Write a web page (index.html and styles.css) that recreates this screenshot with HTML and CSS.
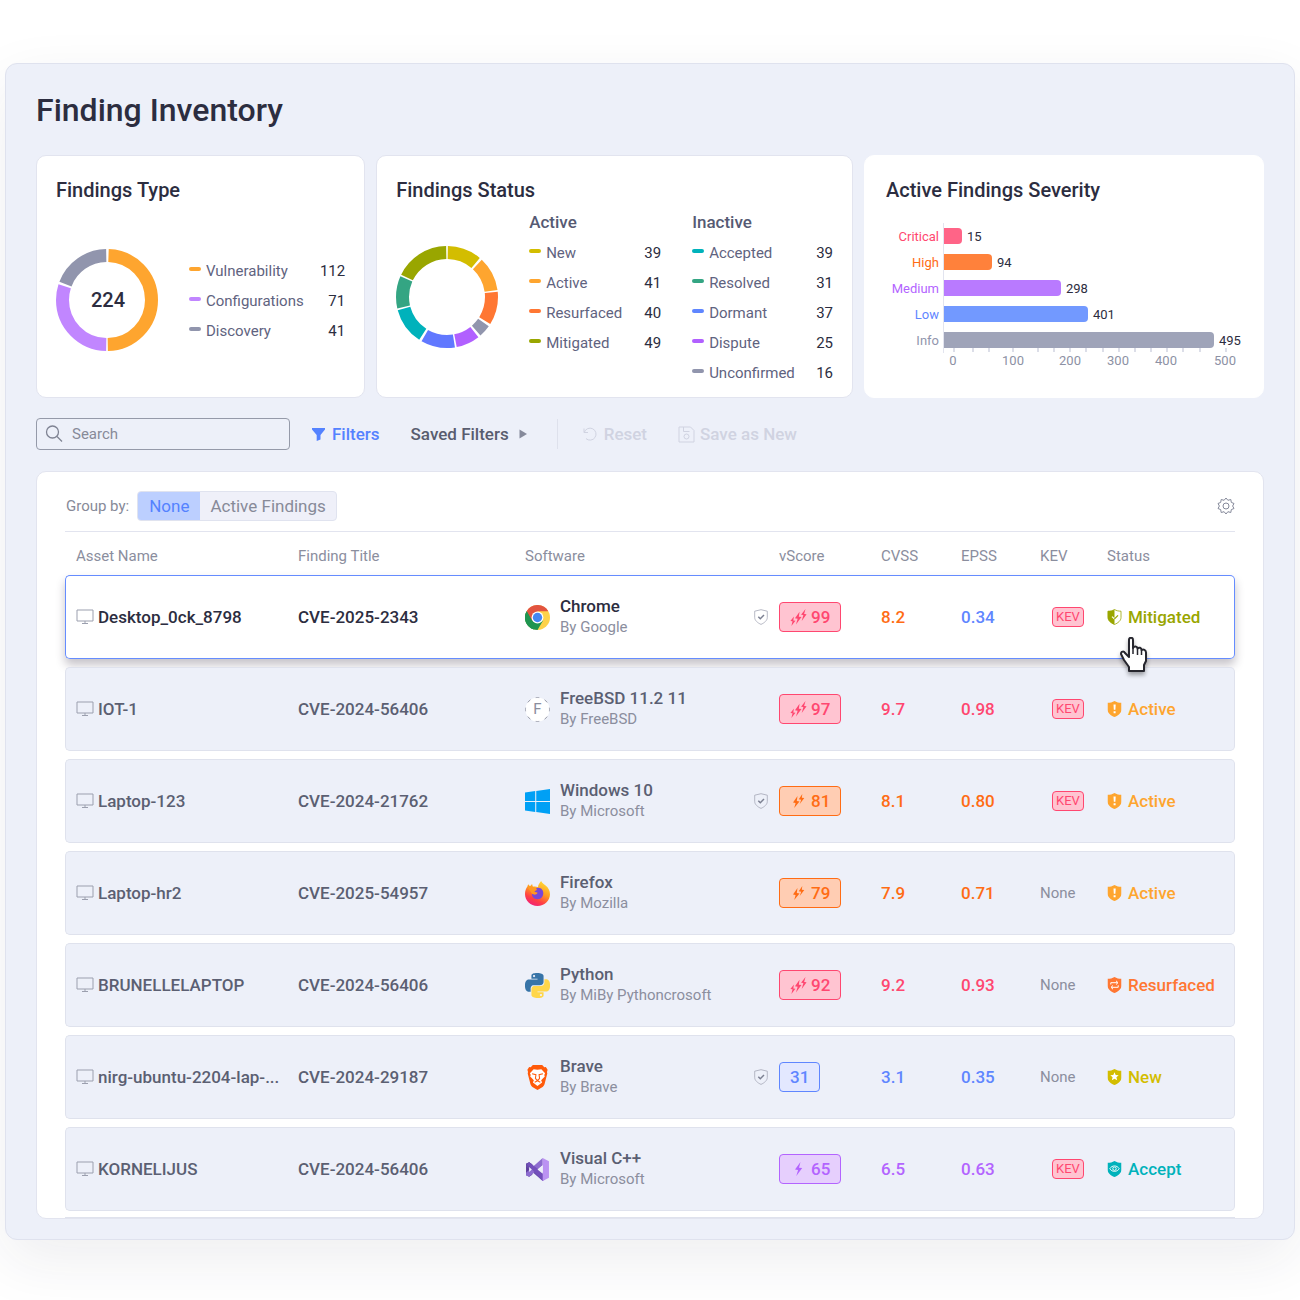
FILE: index.html
```html
<!DOCTYPE html>
<html lang="en">
<head>
    <meta charset="UTF-8" />
    <meta name="viewport" content="width=device-width, initial-scale=1.0" />
    <title>Finding Inventory</title>
    <link rel="stylesheet" href="styles.css">
</head>
<body>
    <!-- Shared icons -->
    <svg class="sprite" aria-hidden="true">
        <symbol id="monitor" viewBox="0 0 18 16"><path d="M1 1h16v11H1zM9 12v2.500M6 14.500h6" fill="none" stroke="currentColor"/></symbol>
        <symbol id="verified" viewBox="0 0 14 16"><path d="M7 .7 13.300 2.200v6.300c0 3-3 5.400-6.300 6.900C3.700 13.900.7 11.500.7 8.500V2.200z" fill="none" stroke="currentColor" stroke-width=".8"/><path d="m4.300 7.700 2 2L10 6" fill="none" stroke="#7c8092" stroke-width="1.500"/></symbol>
        <symbol id="bolt" viewBox="0 0 8 14"><path d="M6 0 .5 7.600 3.600 8 1.800 14 7.700 6 4.500 5.700z" fill="currentColor"/></symbol>
        <symbol id="bolt2" viewBox="0 0 12 14"><path d="M5 2 .5 8.600l2.600.3L1.700 14 7 7.400l-2.700-.3zM9.800 0 6.300 5.300l2.400.4L7.200 10 11.800 4 9.300 3.700z" fill="currentColor"/></symbol>
        <symbol id="bolt3" viewBox="0 0 16 16"><path d="M3.700 7 .4 11.300l2 .3L1.300 16l3.800-5-2-.2zM9 2.500 4.700 8.800l2.500.3L5.600 14.500l5.200-7-2.500-.3zM14.600 0l-4.200 5.300 2.200.4L11 11.300 15.600 5l-2.300-.3z" fill="currentColor"/></symbol>
        <symbol id="shield" viewBox="0 0 14 16"><path d="M7 0c2 1.300 4.500 1.800 7 1.800v6.700c0 3.500-3.300 6-7 7.500-3.700-1.500-7-4-7-7.500V1.800C2.500 1.800 5 1.300 7 0z" fill="currentColor"/></symbol>
        <symbol id="st-mitigated" viewBox="0 0 14 16"><path d="M7 .5c2 1.200 4 1.700 6.500 1.700v6.300c0 3.200-3 5.500-6.500 7C3.500 14 .5 11.700.5 8.500V2.200C3 2.200 5 1.700 7 .5z" fill="none" stroke="currentColor" stroke-width=".8"/><path d="M7 .5v15C3.500 14 .3 11.700.3 8.500V2C3 2.200 5 1.700 7 .5z" fill="currentColor"/><path d="m4.500 7.600 2.300 2.200" stroke="#fff" stroke-width="1.200"/><path d="M7 9.800 10.500 6.300" stroke="currentColor" stroke-width="1.200"/></symbol>
        <symbol id="st-active" viewBox="0 0 14 16"><use href="#shield"/><path d="M6 3.500h2.200l-.3 5.300H6.300zM6.100 10.300h2v2h-2z" fill="#fff"/></symbol>
        <symbol id="st-resurfaced" viewBox="0 0 14 16"><use href="#shield"/><path d="M3.300 7.500V5.700h6.500M8.500 3.800l2 1.900-2 1.800M10.700 8.300v2H4.200M5.500 8.500l-2 1.800 2 1.900" fill="none" stroke="#fff"/></symbol>
        <symbol id="st-new" viewBox="0 0 14 16"><use href="#shield"/><path d="m7 3.300 1.200 2.800 3 .2-2.300 2 .8 3L7 9.700l-2.700 1.600.8-3-2.300-2 3-.2z" fill="#fff"/></symbol>
        <symbol id="st-accept" viewBox="0 0 14 16"><use href="#shield"/><path d="M2.300 7.700C4.500 4 9.500 4 11.700 7.700 9.500 11.300 4.500 11.300 2.300 7.700z" fill="none" stroke="#fff" stroke-width=".9"/><circle cx="7" cy="7.700" r="1.700" fill="none" stroke="#fff" stroke-width=".9"/></symbol>
    </svg>

    <main class="panel">
        <h1>Finding Inventory</h1>

        <div class="cards">
            <section class="card">
                <h2>Findings Type</h2>
                <div class="type-body">
                    <svg class="donut" viewBox="0 0 102 102" role="img" aria-label="Findings by type">
                        <g fill="none" stroke-width="13" transform="rotate(-90 51 51)">
                            <circle cx="51" cy="51" r="44.500" pathLength="360" stroke="#fea52f" stroke-dasharray="177 183" stroke-dashoffset="-2"/>
                            <circle cx="51" cy="51" r="44.500" pathLength="360" stroke="#c186ff" stroke-dasharray="107 253" stroke-dashoffset="-181"/>
                            <circle cx="51" cy="51" r="44.500" pathLength="360" stroke="#9195ad" stroke-dasharray="68 292" stroke-dashoffset="-291"/>
                        </g>
                        <text class="donut-total" x="52" y="58" text-anchor="middle">224</text>
                    </svg>
                    <ul class="legend">
                        <li><i class="dash amber"></i>Vulnerability<b>112</b></li>
                        <li><i class="dash violet"></i>Configurations<b>71</b></li>
                        <li><i class="dash grey"></i>Discovery<b>41</b></li>
                    </ul>
                </div>
            </section>

            <section class="card">
                <h2>Findings Status</h2>
                <div class="status-body">
                    <svg class="donut" viewBox="0 0 102 102" role="img" aria-label="Findings by status">
                        <g fill="none" stroke-width="13" transform="rotate(-90 51 51)">
                            <circle cx="51" cy="51" r="44.500" pathLength="360" stroke="#d3bd00" stroke-dasharray="39 321" stroke-dashoffset="-1"/>
                            <circle cx="51" cy="51" r="44.500" pathLength="360" stroke="#fea52f" stroke-dasharray="39 321" stroke-dashoffset="-43"/>
                            <circle cx="51" cy="51" r="44.500" pathLength="360" stroke="#ff7733" stroke-dasharray="38 322" stroke-dashoffset="-84"/>
                            <circle cx="51" cy="51" r="44.500" pathLength="360" stroke="#9195ad" stroke-dasharray="14 346" stroke-dashoffset="-125"/>
                            <circle cx="51" cy="51" r="44.500" pathLength="360" stroke="#b160ff" stroke-dasharray="27 333" stroke-dashoffset="-142"/>
                            <circle cx="51" cy="51" r="44.500" pathLength="360" stroke="#6178ff" stroke-dasharray="39 321" stroke-dashoffset="-171"/>
                            <circle cx="51" cy="51" r="44.500" pathLength="360" stroke="#00b2bb" stroke-dasharray="42 318" stroke-dashoffset="-213"/>
                            <circle cx="51" cy="51" r="44.500" pathLength="360" stroke="#34a583" stroke-dasharray="37 323" stroke-dashoffset="-257"/>
                            <circle cx="51" cy="51" r="44.500" pathLength="360" stroke="#99a600" stroke-dasharray="63 297" stroke-dashoffset="-296"/>
                        </g>
                    </svg>
                    <div class="status-group">
                        <h3>Active</h3>
                        <ul class="legend">
                            <li><i class="dash yellow"></i>New<b>39</b></li>
                            <li><i class="dash amber"></i>Active<b>41</b></li>
                            <li><i class="dash orange"></i>Resurfaced<b>40</b></li>
                            <li><i class="dash olive"></i>Mitigated<b>49</b></li>
                        </ul>
                    </div>
                    <div class="status-group">
                        <h3>Inactive</h3>
                        <ul class="legend">
                            <li><i class="dash teal"></i>Accepted<b>39</b></li>
                            <li><i class="dash green"></i>Resolved<b>31</b></li>
                            <li><i class="dash blue"></i>Dormant<b>37</b></li>
                            <li><i class="dash purple"></i>Dispute<b>25</b></li>
                            <li><i class="dash grey"></i>Unconfirmed<b>16</b></li>
                        </ul>
                    </div>
                </div>
            </section>

            <section class="card card-severity">
                <h2>Active Findings Severity</h2>
                <ul class="bars">
                    <li class="critical"><span>Critical</span><div class="track"><i class="bar" style="width: 6%"></i>15</div></li>
                    <li class="high"><span>High</span><div class="track"><i class="bar" style="width: 16%"></i>94</div></li>
                    <li class="medium"><span>Medium</span><div class="track"><i class="bar" style="width: 39%"></i>298</div></li>
                    <li class="low"><span>Low</span><div class="track"><i class="bar" style="width: 48%"></i>401</div></li>
                    <li class="info"><span>Info</span><div class="track"><i class="bar" style="width: 90%"></i>495</div></li>
                </ul>
                <svg class="axis" viewBox="0 0 301 22" aria-hidden="true">
                    <path d="M11 0v4M30 0v4M46 0v4M70 0v4M95 0v4M111 0v4M127 0v4M143 0v4M160 0v4M176 0v4M192 0v4M208 0v4M224 0v4M240 0v4M257 0v4M283 0v4" stroke="#dcdee8" stroke-width="2"/>
                    <g text-anchor="middle">
                        <text x="10" y="17">0</text>
                        <text x="70" y="17">100</text>
                        <text x="127" y="17">200</text>
                        <text x="175" y="17">300</text>
                        <text x="223" y="17">400</text>
                        <text x="282" y="17">500</text>
                    </g>
                </svg>
            </section>
        </div>

        <div class="toolbar">
            <label class="search">
                <svg width="18" height="18" viewBox="0 0 18 18" fill="none" stroke="#7f8393" stroke-width="1.300" aria-hidden="true"><circle cx="7.500" cy="7" r="6"/><path d="m12 11.500 5 5"/></svg>
                <input type="search" placeholder="Search" aria-label="Search">
            </label>
            <button class="tool filters"><svg width="13" height="13" viewBox="0 0 13 13" aria-hidden="true"><path d="M0 0h13v1.500L8.500 7v4.500L4.700 13V7L0 1.500z" fill="currentColor"/></svg>Filters</button>
            <button class="tool saved">Saved Filters<svg width="8" height="10" viewBox="0 0 8 10" aria-hidden="true"><path d="M.5.500 8 5 .5 9.500z" fill="#868a9b"/></svg></button>
            <span class="divider"></span>
            <button class="tool reset" disabled><svg width="14" height="14" viewBox="0 0 14 14" fill="none" stroke="currentColor" aria-hidden="true"><path d="M1 1.500v4h4M1.300 5.300A6 6 0 1 1 3 11.600"/></svg>Reset</button>
            <button class="tool save" disabled><svg width="17" height="17" viewBox="0 0 17 17" fill="none" stroke="currentColor" aria-hidden="true"><path d="M1 1h11.500L16 4.500V16H1zM5.500 1v4.500h6"/><circle cx="8.500" cy="10.500" r="2.500"/></svg>Save as New</button>
        </div>

        <section class="inventory">
            <div class="group-bar">
                <span class="group-label">Group by:</span>
                <div class="segmented" role="group" aria-label="Group by">
                    <button class="selected" aria-pressed="true">None</button>
                    <button aria-pressed="false">Active Findings</button>
                </div>
                <button class="settings" aria-label="Table settings">
                    <svg width="18" height="18" viewBox="0 0 18 18" fill="none" stroke="#85899a" aria-hidden="true"><path d="M9 1l1.900 2.300 2.900-.8.500 2.900 2.700 1.100L15.600 9l1.400 2.500-2.700 1.100-.5 2.900-2.900-.8L9 17l-1.900-2.300-2.900.8-.5-2.900L1 11.500 2.400 9 1 6.500l2.700-1.100.5-2.900 2.900.8z" stroke-linejoin="round"/><circle cx="9" cy="9" r="3"/></svg>
                </button>
            </div>

            <table>
                <colgroup>
                    <col class="c-asset"><col class="c-finding"><col class="c-software"><col class="c-score"><col class="c-cvss"><col class="c-epss"><col class="c-kev"><col class="c-status">
                </colgroup>
                <thead>
                    <tr><th>Asset Name</th><th>Finding Title</th><th>Software</th><th>vScore</th><th>CVSS</th><th>EPSS</th><th>KEV</th><th>Status</th></tr>
                </thead>
                <tbody>
                    <tr class="active-row">
                        <td><div class="asset"><svg><use href="#monitor"/></svg><span>Desktop_0ck_8798</span></div></td>
                        <td>CVE-2025-2343</td>
                        <td>
                            <div class="software">
                                <svg class="logo" viewBox="0 0 24 24"><circle cx="12" cy="12" r="12" fill="#fdd24a"/><path d="M12 12 1.600 6A12 12 0 0 0 12 24l5.200-9z" fill="#1f9550"/><path d="M1.600 6a12 12 0 0 1 20.800 0H12v6z" fill="#e25440"/><path d="M1.600 6 6.800 15 12 12V6z" fill="#e25440"/><path d="M1.600 6 6.800 15a6 6 0 0 0 5.200 3l-3.400 5.600A12 12 0 0 1 1.600 6z" fill="#1f9550"/><circle cx="12" cy="12" r="5.700" fill="#fff"/><circle cx="12" cy="12" r="4.500" fill="#4587f3"/></svg>
                                <div class="names"><strong>Chrome</strong><small>By Google</small></div>
                                <svg class="verified"><use href="#verified"/></svg>
                            </div>
                        </td>
                        <td><span class="score critical"><svg><use href="#bolt3"/></svg>99</span></td>
                        <td class="high">8.2</td>
                        <td class="low">0.34</td>
                        <td><span class="kev">KEV</span></td>
                        <td>
                            <div class="status olive"><svg><use href="#st-mitigated"/></svg>Mitigated
                                <svg class="pointer" viewBox="0 0 28 36" aria-hidden="true"><path d="M9 3c0-3 4-3 4 0v8c1-2 4-2 4.500.5C19 10 21.500 10.500 21.500 13c2-1 4.500 0 4.500 2.500V24l-2 4v6H9v-4L4 23l-3-6c0-3 3-3 4-1l4 4z" fill="#fff" stroke="#26262e" stroke-width="2" stroke-linejoin="round"/><path d="M13 10v7M17.500 12v6M21.500 13v5" stroke="#26262e" stroke-width="1.500"/></svg>
                            </div>
                        </td>
                    </tr>
                    <tr>
                        <td><div class="asset"><svg><use href="#monitor"/></svg><span>IOT-1</span></div></td>
                        <td>CVE-2024-56406</td>
                        <td>
                            <div class="software">
                                <span class="logo letter"><svg viewBox="0 0 25 25" aria-hidden="true"><circle cx="12.500" cy="12.500" r="12" pathLength="80" fill="#fff" stroke="#9a9dab" stroke-dasharray="4 6" stroke-dashoffset="2"/></svg>F</span>
                                <div class="names"><strong>FreeBSD 11.2 11</strong><small>By FreeBSD</small></div>
                            </div>
                        </td>
                        <td><span class="score critical"><svg><use href="#bolt3"/></svg>97</span></td>
                        <td class="critical">9.7</td>
                        <td class="critical">0.98</td>
                        <td><span class="kev">KEV</span></td>
                        <td><div class="status amber"><svg><use href="#st-active"/></svg>Active</div></td>
                    </tr>
                    <tr>
                        <td><div class="asset"><svg><use href="#monitor"/></svg><span>Laptop-123</span></div></td>
                        <td>CVE-2024-21762</td>
                        <td>
                            <div class="software">
                                <svg class="logo" viewBox="0 0 24 24"><path d="M0 3.400 9.800 2v9.500H0zM10.800 1.900 24 0v11.500H10.800zM0 12.500h9.800V22L0 20.600zM10.800 12.500H24V24l-13.200-1.900z" fill="#00a0f5"/></svg>
                                <div class="names"><strong>Windows 10</strong><small>By Microsoft</small></div>
                                <svg class="verified"><use href="#verified"/></svg>
                            </div>
                        </td>
                        <td><span class="score high"><svg><use href="#bolt2"/></svg>81</span></td>
                        <td class="high">8.1</td>
                        <td class="high">0.80</td>
                        <td><span class="kev">KEV</span></td>
                        <td><div class="status amber"><svg><use href="#st-active"/></svg>Active</div></td>
                    </tr>
                    <tr>
                        <td><div class="asset"><svg><use href="#monitor"/></svg><span>Laptop-hr2</span></div></td>
                        <td>CVE-2025-54957</td>
                        <td>
                            <div class="software">
                                <svg class="logo" viewBox="0 0 24 24">
                                    <defs>
                                        <linearGradient id="fox" x1=".8" y1="0" x2=".3" y2="1"><stop offset="0" stop-color="#ffe13a"/><stop offset=".45" stop-color="#ff9a1f"/><stop offset=".75" stop-color="#ff3f45"/><stop offset="1" stop-color="#f0207a"/></linearGradient>
                                    </defs>
                                    <path d="M15.500 0c1 2 2.500 3 4.300 4.300C22.500 6.500 24 9.500 24 12.800 24 19 18.600 24 12 24S0 19 0 12.500c0-3 1-5.500 2.300-7.200L3 3l1.800 2 2-2.200.7 2.600c2-.4 3.700-.1 5 .6C12.500 3.500 14 2 15.500 0z" fill="url(#fox)"/>
                                    <path d="M12 6.500c3.500-.5 6 2.500 5.500 6-.4 3.300-3 5-5.500 5-3.500 0-5.500-2.500-5.300-5.200L9.500 13l2.700-1.700-3-.8c.2-2 1.300-3.500 2.800-4z" fill="#7847d8"/>
                                    <path d="M2.500 6c2-1 5-1 7 .6l2 1.400c-.5 1.500-2 1.500-3 2l3.500 1.500c-1 1.700-3.500 2-5.200.8" fill="#ff9822"/>
                                </svg>
                                <div class="names"><strong>Firefox</strong><small>By Mozilla</small></div>
                            </div>
                        </td>
                        <td><span class="score high"><svg><use href="#bolt2"/></svg>79</span></td>
                        <td class="high">7.9</td>
                        <td class="high">0.71</td>
                        <td class="none">None</td>
                        <td><div class="status amber"><svg><use href="#st-active"/></svg>Active</div></td>
                    </tr>
                    <tr>
                        <td><div class="asset"><svg><use href="#monitor"/></svg><span>BRUNELLELAPTOP</span></div></td>
                        <td>CVE-2024-56406</td>
                        <td>
                            <div class="software">
                                <svg class="logo" viewBox="0 0 24 24">
                                    <path fill="#3774a8" d="M14.250.18l.9.2.73.26.59.3.45.32.34.34.25.34.16.33.1.3.04.26.02.2-.01.13V8.500l-.05.63-.13.55-.21.46-.26.38-.3.31-.33.25-.35.19-.35.14-.33.1-.3.07-.26.04-.21.02H8.770l-.69.05-.59.14-.5.22-.41.27-.33.32-.27.35-.2.36-.15.37-.1.35-.07.32-.04.27-.02.21v3.060H3.170l-.21-.03-.28-.07-.32-.12-.35-.18-.36-.26-.36-.36-.35-.46-.32-.59-.28-.73-.21-.88-.14-1.050-.05-1.230.06-1.220.16-1.040.24-.87.32-.71.36-.57.4-.44.42-.33.42-.24.4-.16.36-.1.32-.05.24-.01h.16l.06.01h8.160v-.83H6.180l-.01-2.750-.02-.37.05-.34.11-.31.17-.28.25-.26.31-.23.38-.2.44-.18.51-.15.58-.12.64-.1.71-.06.77-.04.84-.02 1.270.05zm-6.300 1.980l-.23.33-.08.41.08.41.23.34.33.22.41.09.41-.09.33-.22.23-.34.08-.41-.08-.41-.23-.33-.33-.22-.41-.09-.41.09z"/>
                                    <path fill="#ffd64a" d="M21.040 6.110l.28.06.32.12.35.18.36.27.36.35.35.47.32.59.28.73.21.88.14 1.040.05 1.230-.06 1.230-.16 1.040-.24.86-.32.71-.36.57-.4.45-.42.33-.42.24-.4.16-.36.09-.32.05-.24.02-.16-.01h-8.220v.82h5.840l.01 2.760.02.36-.05.34-.11.31-.17.29-.25.25-.31.24-.38.2-.44.17-.51.15-.58.13-.64.09-.71.07-.77.04-.84.01-1.270-.04-1.070-.14-.9-.2-.73-.25-.59-.3-.45-.33-.34-.34-.25-.34-.16-.33-.1-.3-.04-.25-.02-.2.01-.13v-5.340l.05-.64.13-.54.21-.46.26-.38.3-.32.33-.24.35-.2.35-.14.33-.1.3-.06.26-.04.21-.02.13-.01h5.840l.69-.05.59-.14.5-.21.41-.28.33-.32.27-.35.2-.36.15-.36.1-.35.07-.32.04-.28.02-.21V6.070h2.090l.14.01zm-6.470 14.250l-.23.33-.08.41.08.41.23.33.33.23.41.08.41-.08.33-.23.23-.33.08-.41-.08-.41-.23-.33-.33-.23-.41-.08-.41.08z"/>
                                </svg>
                                <div class="names"><strong>Python</strong><small>By MiBy Pythoncrosoft</small></div>
                            </div>
                        </td>
                        <td><span class="score critical"><svg><use href="#bolt3"/></svg>92</span></td>
                        <td class="critical">9.2</td>
                        <td class="critical">0.93</td>
                        <td class="none">None</td>
                        <td><div class="status orange"><svg><use href="#st-resurfaced"/></svg>Resurfaced</div></td>
                    </tr>
                    <tr>
                        <td><div class="asset"><svg><use href="#monitor"/></svg><span>nirg-ubuntu-2204-lap-...</span></div></td>
                        <td>CVE-2024-29187</td>
                        <td>
                            <div class="software">
                                <svg class="logo" viewBox="0 0 24 24"><path d="M7.500 0h9l2 2.200 1.500-.2 1.700 2.600-.6 2 .3 1.500-2.600 10.200c-.3 1.200-.9 2-1.900 2.700L12 24l-4.900-3c-1-.7-1.600-1.500-1.900-2.700L2.600 8.100l.3-1.500-.6-2L4 2l1.500.2z" fill="#ff5a0a"/><path d="M8.300 4 12 4.600l3.700-.6 3.600 4-.8 1.500.5 1.500-3.500 3.700.9 2-4.400 3.500-4.400-3.500.9-2L5 11l.5-1.500L4.700 8z" fill="#fff"/><path d="m6.800 8.500 3.700.8-.5 3.500 1.200 1.500h1.600l1.200-1.500-.5-3.500 3.700-.8M9.300 16.500l2.700-1.400 2.700 1.400" fill="none" stroke="#ff5a0a"/></svg>
                                <div class="names"><strong>Brave</strong><small>By Brave</small></div>
                                <svg class="verified"><use href="#verified"/></svg>
                            </div>
                        </td>
                        <td><span class="score low">31</span></td>
                        <td class="low">3.1</td>
                        <td class="low">0.35</td>
                        <td class="none">None</td>
                        <td><div class="status yellow"><svg><use href="#st-new"/></svg>New</div></td>
                    </tr>
                    <tr>
                        <td><div class="asset"><svg><use href="#monitor"/></svg><span>KORNELIJUS</span></div></td>
                        <td>CVE-2024-56406</td>
                        <td>
                            <div class="software">
                                <svg class="logo" viewBox="0 0 24 24"><path d="M1 6.500 4 5l3 2v10l-3 2-3-1.500z" fill="#5c3c9a"/><path d="M4 5 17 17v6L1 9V6.500z" fill="#684bab"/><path d="M17 1v7L4 19l-3-1.500V15z" fill="#8d6cd0"/><path d="M4 5 22 19l-5 4L2 7z" fill="#7350bb"/><path d="m17 1 6 3v16l-6 3z" fill="#bb93f2"/><path d="M4 9.500v5L6.500 12zM17 8v8l-5-4z" fill="#edf0f9"/></svg>
                                <div class="names"><strong>Visual C++</strong><small>By Microsoft</small></div>
                            </div>
                        </td>
                        <td><span class="score medium"><svg><use href="#bolt"/></svg>65</span></td>
                        <td class="medium">6.5</td>
                        <td class="medium">0.63</td>
                        <td><span class="kev">KEV</span></td>
                        <td><div class="status teal"><svg><use href="#st-accept"/></svg>Accept</div></td>
                    </tr>
                </tbody>
            </table>
        </section>
    </main>
</body>
</html>
```

FILE: styles.css
```css
* { box-sizing: border-box; }
body { margin: 0; padding: 63px 5px 60px; background: #fff; font-family: Roboto, "Open Sans", sans-serif; font-size: 15px; color: #2c2d40; }
h1, h2, h3, ul { margin: 0; padding: 0; }
h1, h2, h3 { font-weight: 500; }
ul { list-style: none; }
button { border: 0; padding: 0; background: none; font: inherit; color: inherit; }
.sprite { display: none; }

.panel {
    padding: 26px 30px 20px;
    background: #edf0f9;
    border: 1px solid #dfe2ee;
    border-radius: 12px;
    box-shadow: 0 20px 60px rgba(40, 40, 60, 0.08);
}
h1 { font-size: 32px; line-height: 40px; }

/* Summary cards */
.cards {
    display: grid;
    grid-template-columns: 330fr 478fr 399fr;
    gap: 11px;
    margin-top: 25px;
}
.card {
    height: 243px;
    padding: 22px 19px 0;
    background: #fff;
    border: 1px solid #e2e4ef;
    border-radius: 10px;
}
.card h2 { font-size: 20px; line-height: 24px; }
.card h3 { font-size: 17px; line-height: 20px; color: #565a73; }
.donut { flex: none; width: 102px; height: 102px; }
.donut-total { font-size: 20px; font-weight: 500; fill: #2c2d40; }
.type-body { display: flex; align-items: center; gap: 31px; margin-top: 47px; }
.type-body .legend { flex: 1; margin-top: 2px; }
.status-body { display: flex; gap: 31px; margin-top: 10px; }
.status-body .donut { margin-top: 34px; }
.status-group { flex: 133; }
.status-group:last-child { flex: 142; }
.status-group .legend { margin-top: 6px; }

.legend li { display: flex; align-items: center; height: 30px; color: #5f6380; }
.legend b { margin-left: auto; font-weight: 400; color: #2c2d40; }
.dash { width: 12px; height: 4px; margin: 0 5px 5px 0; border-radius: 2px; background: currentColor; }

.amber { color: #fea52f; }
.violet { color: #c186ff; }
.grey { color: #9195ad; }
.yellow { color: #d3bd00; }
.orange { color: #ff7733; }
.olive { color: #99a600; }
.teal { color: #00b2bb; }
.green { color: #34a583; }
.blue { color: #5f86ff; }
.purple { color: #b160ff; }

/* Severity levels, shared by the chart and the table */
.critical { color: #ff4770; --bar: #ff6487; --tint: #ffc4d1; }
.high { color: #ff6c14; --bar: #ff813b; --tint: #ffcdb3; }
.medium { color: #b364ff; --bar: #b97aff; --tint: #e6cffd; }
.low { color: #5f86ff; --bar: #7299ff; --tint: #e3e8ff; }
.info { color: #9195ad; --bar: #9fa4b9; }

.card-severity { padding-left: 21px; border-color: #fff; }
.bars { margin-top: 21px; }
.bars li { display: flex; align-items: center; height: 26px; font-size: 13px; }
.bars span { width: 53px; text-align: right; }
.track { display: flex; align-items: center; gap: 5px; flex: 1; height: 26px; margin-left: 4px; border-left: 1px solid #e2e4ef; color: #2c2d40; }
.bar { height: 16px; border-radius: 0 4px 4px 0; background: var(--bar); }
.axis { display: block; width: 301px; height: 22px; margin: -5px 0 0 57px; font-size: 13px; fill: #8d91a4; }

/* Search and filters */
.toolbar { display: flex; align-items: center; height: 32px; margin-top: 20px; font-size: 17px; font-weight: 500; }
.search { display: flex; align-items: center; gap: 9px; width: 254px; height: 32px; padding: 0 8px; border: 1px solid #959aa9; border-radius: 4px; }
.search input { flex: 1; min-width: 0; padding: 0; border: 0; outline: 0; background: none; font: 400 15px Roboto, sans-serif; }
.search input::placeholder { color: #878a98; }
.tool { display: flex; align-items: center; gap: 7px; font-weight: 500; }
.filters { margin-left: 22px; color: #5482ff; }
.saved { gap: 10px; margin-left: 31px; color: #595d6f; }
.divider { width: 1px; height: 30px; margin: 0 25px 0 30px; background: #dee1ec; }
.reset, .save { color: #d0d3e1; }
.save { gap: 5px; margin-left: 31px; }

/* Findings table */
.inventory { height: 748px; margin-top: 21px; padding: 19px 28px 0; background: #fff; border: 1px solid #e2e4ef; border-radius: 10px; overflow: hidden; }
.inventory::after { content: ""; display: block; margin-top: -2px; border-top: 1px solid #dfe2ed; }
.group-bar { display: flex; align-items: center; height: 41px; padding-bottom: 11px; border-bottom: 1px solid #e2e4ef; }
.group-label { margin: 0 8px 0 1px; color: #878a98; }
.segmented { display: flex; height: 30px; border: 1px solid #e0e3ef; border-radius: 4px; background: #eff0f9; overflow: hidden; font-size: 17px; color: #878a98; }
.segmented button { padding: 0 10px; }
.segmented .selected { padding: 0 11px; background: #bccfff; color: #5482ff; }
.settings { height: 18px; margin-left: auto; }

table { width: 100%; table-layout: fixed; border-collapse: separate; border-spacing: 0 8px; margin-top: -8px; font-size: 17px; font-weight: 500; color: #5b5f72; }
.c-asset { width: 233px; }
.c-finding { width: 227px; }
.c-software { width: 254px; }
.c-score { width: 102px; }
.c-cvss { width: 80px; }
.c-epss { width: 79px; }
.c-kev { width: 67px; }
.c-status { width: 128px; }
th { height: 35px; padding: 12px 0 0; text-align: left; font-size: 15px; font-weight: 400; color: #8b8e9e; }
td { height: 84px; padding: 0; background: #edf0f9; border: solid #dfe2ed; border-width: 1px 0; }
th:first-child { padding-left: 11px; }
td:first-child { padding-left: 10px; border-left-width: 1px; border-radius: 5px 0 0 5px; }
td:last-child { border-right-width: 1px; border-radius: 0 5px 5px 0; }
td.none { font-size: 15px; font-weight: 400; color: #8b8e9e; }

.active-row { border-radius: 5px; box-shadow: 0 6px 10px rgba(50, 40, 60, 0.28); color: #2c2d40; }
.active-row td { background: #fff; border-color: #658cff; }

.asset { display: flex; align-items: center; gap: 4px; white-space: nowrap; }
.asset svg { flex: none; width: 18px; height: 16px; color: #9b9fae; }
.software { display: flex; align-items: center; gap: 10px; padding-right: 11px; }
.logo { flex: none; width: 25px; height: 25px; }
.letter { position: relative; z-index: 0; display: grid; place-items: center; font-size: 15px; font-weight: 400; color: #8b8e9e; }
.letter svg { position: absolute; inset: 0; z-index: -1; }
.names { flex: 1; }
.names strong, .names small { display: block; font-weight: 500; line-height: 21px; }
.names small { font-size: 15px; font-weight: 400; color: #8b8e9e; }
.verified { width: 14px; height: 16px; color: #a4a7b6; }

.score { display: inline-flex; align-items: center; gap: 4px; height: 30px; padding: 0 10px; border: 1px solid; border-radius: 4px; background: var(--tint); }
.score svg { width: 17px; height: 14px; }
.score.critical svg { height: 17px; }
.kev { display: block; width: 32px; height: 20px; margin-left: 12px; border: 1px solid #ff4770; border-radius: 4px; background: #ffc4d1; font-size: 13px; font-weight: 400; line-height: 18px; text-align: center; color: #ff4770; }
.status { position: relative; display: flex; align-items: center; gap: 6px; }
.status svg { width: 15px; height: 16px; }
.status .pointer { position: absolute; left: 13px; top: 30px; width: 28px; height: 36px; filter: drop-shadow(0 3px 2px rgba(0, 0, 0, 0.35)); }
```
